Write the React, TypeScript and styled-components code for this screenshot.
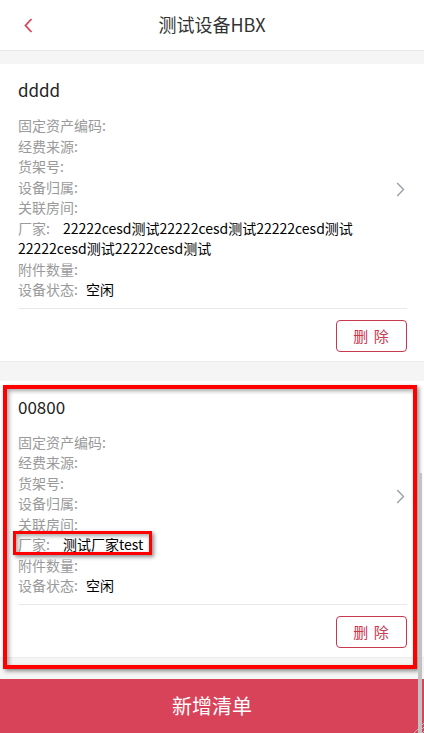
import React from "react";
import styled, { createGlobalStyle } from "styled-components";

const Global = createGlobalStyle`
  html, body { margin: 0; padding: 0; }
  body {
    font-family: "Noto Sans CJK SC", "Microsoft YaHei", "Noto Sans", sans-serif;
    background: #f5f5f5;
  }
  * { box-sizing: border-box; }
`;

const Page = styled.div`
  position: relative;
  width: 424px;
  height: 733px;
  display: flex;
  flex-direction: column;
  background: #f5f5f5;
  overflow: hidden;
`;

const Header = styled.header`
  height: 51px;
  flex: none;
  display: flex;
  align-items: center;
  justify-content: center;
  background: #fff;
  border-bottom: 1px solid #e8e8e8;
  position: relative;
`;

const BackButton = styled.button`
  position: absolute;
  left: 18px;
  top: 13px;
  width: 20px;
  height: 24px;
  padding: 0;
  border: none;
  background: transparent;
  display: flex;
  align-items: center;
  justify-content: center;
`;

const Title = styled.h1`
  margin: 0 0 2px;
  font-size: 18px;
  font-weight: 400;
  color: #333;
  line-height: 24px;
`;

const List = styled.div`
  flex: 1;
  display: flex;
  flex-direction: column;
  gap: 19px;
  padding-top: 13px;
`;

const Card = styled.section`
  position: relative;
  background: #fff;
  border-bottom: 1px solid #ececec;
`;

const Body = styled.div`
  display: flex;
  align-items: center;
  padding: 16px 17px 8px 18px;
`;

const Content = styled.div`
  flex: 1;
  margin-right: 10px;
`;

const Name = styled.div`
  font-size: 17px;
  line-height: 20px;
  color: #222;
  margin-bottom: 15px;
`;

const Row = styled.div`
  position: relative;
  font-size: 14px;
  line-height: 20.5px;
  color: #000;
`;

const Label = styled.span`
  color: #9a9a9a;
`;

const Value = styled.span<{ $gap?: number }>`
  color: #000;
  margin-left: ${(p) => p.$gap ?? 0}px;
`;

const Chevron = styled.div`
  width: 14px;
  display: flex;
  justify-content: center;
`;

const Divider = styled.div`
  height: 1px;
  margin: 0 17px 0 18px;
  background: #e8e8e8;
`;

const Footer = styled.div`
  display: flex;
  justify-content: flex-end;
  padding: 11px 17px 9px;
`;

const DeleteButton = styled.button`
  width: 71px;
  height: 32px;
  border: 1px solid #c9384f;
  border-radius: 4px;
  background: #fff;
  color: #c9384f;
  font-family: inherit;
  font-size: 15px;
  letter-spacing: 1px;
  padding: 0;
`;

const AddButton = styled.button`
  flex: none;
  height: 54px;
  width: 100%;
  border: none;
  background: #d9435a;
  color: #fff;
  font-family: inherit;
  font-size: 20px;
  padding: 0 0 2px;
`;

const Highlight = styled.div<{ $w: number }>`
  position: absolute;
  pointer-events: none;
  border: 4px solid #ff0000;
  box-shadow: 2px 2px 4px rgba(0, 0, 0, 0.45), inset 2px 2px 4px rgba(0, 0, 0, 0.35);
`;

const CardHighlight = styled(Highlight)`
  left: 3px;
  top: 4px;
  width: ${(p) => p.$w}px;
  height: 284px;
`;

const RowHighlight = styled(Highlight)`
  left: -5px;
  top: -3px;
  width: ${(p) => p.$w}px;
  height: 24px;
  border-width: 3.5px;
`;

const ScrollThumb = styled.div`
  position: absolute;
  right: 2px;
  top: 473px;
  width: 4px;
  height: 260px;
  background: #c2c2c2;
`;

const Grip = styled.svg`
  position: absolute;
  right: 0;
  bottom: 0;
`;

type Item = {
  name: string;
  vendor: string;
  status: string;
  highlight?: boolean;
};

const items: Item[] = [
  {
    name: "dddd",
    vendor: "22222cesd测试22222cesd测试22222cesd测试22222cesd测试22222cesd测试",
    status: "空闲",
  },
  { name: "00800", vendor: "测试厂家test", status: "空闲", highlight: true },
];

const emptyLabels = ["固定资产编码:", "经费来源:", "货架号:", "设备归属:", "关联房间:"];

function ChevronRight() {
  return (
    <svg width="9" height="15" viewBox="0 0 9 15">
      <path d="M1.2 1 L7.5 7.5 L1.2 14" fill="none" stroke="#9aa0a8" strokeWidth="1.4" />
    </svg>
  );
}

function DeviceCard({ item }: { item: Item }) {
  return (
    <Card>
      <Body>
        <Content>
          <Name>{item.name}</Name>
          {emptyLabels.map((l) => (
            <Row key={l}>
              <Label>{l}</Label>
            </Row>
          ))}
          <Row>
            <Label>厂家:</Label>
            <Value $gap={13}>{item.vendor}</Value>
            {item.highlight && <RowHighlight $w={139} />}
          </Row>
          <Row>
            <Label>附件数量:</Label>
          </Row>
          <Row>
            <Label>设备状态:</Label>
            <Value $gap={8}>{item.status}</Value>
          </Row>
        </Content>
        <Chevron>
          <ChevronRight />
        </Chevron>
      </Body>
      <Divider />
      <Footer>
        <DeleteButton>删 除</DeleteButton>
      </Footer>
      {item.highlight && <CardHighlight $w={414} />}
    </Card>
  );
}

export default function App() {
  return (
    <>
      <Global />
      <Page>
        <Header>
          <BackButton aria-label="返回">
            <svg width="11" height="15" viewBox="0 0 11 15">
              <path d="M8.5 1 L2.5 7.5 L8.5 14" fill="none" stroke="#d9435a" strokeWidth="1.8" />
            </svg>
          </BackButton>
          <Title>测试设备HBX</Title>
        </Header>
        <List>
          {items.map((it) => (
            <DeviceCard key={it.name} item={it} />
          ))}
        </List>
        <AddButton>新增清单</AddButton>
        <ScrollThumb />
        <Grip width="13" height="13" viewBox="0 0 13 13">
          <path d="M13 3 L3 13 M13 7 L7 13 M13 11 L11 13" stroke="#bdbdbd" strokeWidth="1" />
        </Grip>
      </Page>
    </>
  );
}
